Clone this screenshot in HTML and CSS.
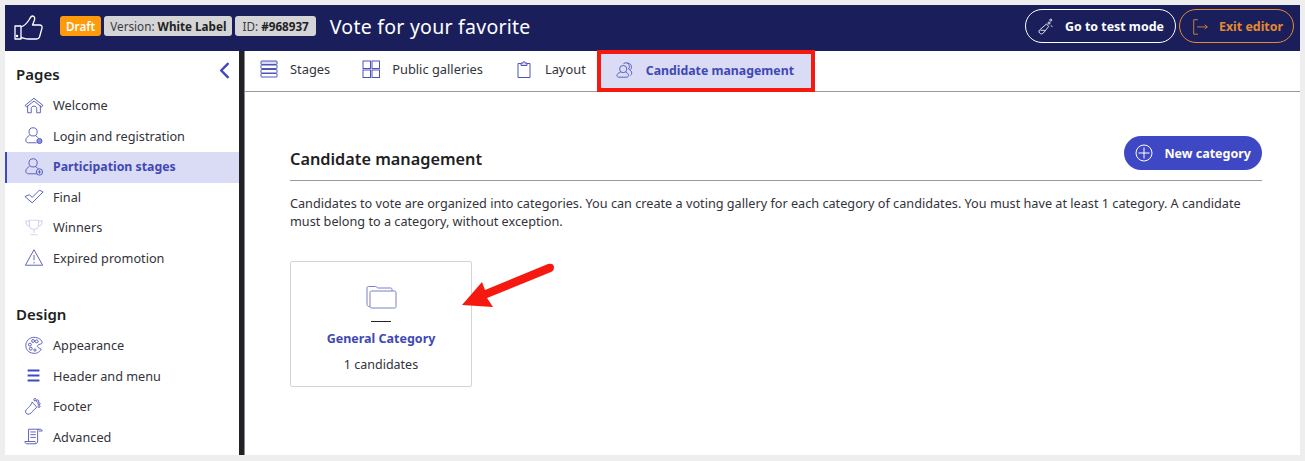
FILE: index.html
```html
<!DOCTYPE html>
<html lang="en">
<head>
<meta charset="utf-8">
<title>Vote for your favorite</title>
<link rel="stylesheet" href="styles.css">
</head>
<body>
<div class="frame">
  <header class="topbar">
    <svg class="logo" viewBox="0 0 30 26" fill="none" stroke="#fff" stroke-width="1.3" stroke-linejoin="round"><path d="M1 11h6v13H1z"/><path d="M7 12c3-1 6-4 8-7 1-2 2-4 3.500-4 2 0 2.500 2 2 4l-2 5h7c2 0 3 1.500 2.500 3l-2.500 9c-.5 1.500-1.500 2-3 2h-8c-3 0-5-1-7.500-1.500"/><circle cx="3" cy="21" r=".6" fill="#fff"/></svg>
    <span class="tag tag-draft">Draft</span>
    <span class="tag">Version:&nbsp;<b>White Label</b></span>
    <span class="tag tag-id">ID:&nbsp;<b>#968937</b></span>
    <h1 class="title">Vote for your favorite</h1>
    <a class="pill pill-test">
      <svg class="pill-icon" viewBox="0 0 20 20" fill="none" stroke="#fff" stroke-width="1"><path d="M3 18.500c-2-1-2.500-3-1-4.500l8-7 2.500 3-6 7.500c-1 1-2.500 1.500-3.500 1z"/><path d="M3 14.500h5"/><circle cx="13" cy="6" r="1.200"/><circle cx="15" cy="2.500" r="1.200"/><path d="M15 9l2 1"/></svg>
      Go to test mode
    </a>
    <a class="pill pill-exit">
      <svg class="pill-icon" viewBox="0 0 20 20" fill="none" stroke="#e68a2e" stroke-width="1"><path d="M7 2H2v17h5"/><path d="M6 10.500h12M15 8l3 2.500-3 2.500"/></svg>
      Exit editor
    </a>
  </header>
  <div class="body">
    <aside class="sidebar">
      <div class="side-head">
        <h2>Pages</h2>
        <svg class="collapse" viewBox="0 0 12 18" fill="none" stroke="#3f48c4" stroke-width="2.600" stroke-linecap="round" stroke-linejoin="round"><path d="M10 2L3 9l7 7"/></svg>
      </div>
      <ul class="menu">
        <li><svg viewBox="0 0 22 20" fill="none" stroke="#4f55b8" stroke-width="1"><path d="M1 10l10-8 10 8-2 1.500-8-6.500-8 6.500z"/><path d="M4 10v8h4v-5c0-3 6-3 6 0v5h4v-8"/></svg>Welcome</li>
        <li><svg viewBox="0 0 22 20" fill="none" stroke="#4f55b8" stroke-width="1"><circle cx="10" cy="6" r="4.500"/><path d="M6 10c-2 1-4 3-4 5 0 2 1 3 3 3h9"/><path d="M13 10.500c1 .5 2 1 2.500 2"/><circle cx="17" cy="16" r="2.800" fill="#8f94d8"/></svg>Login and registration</li>
        <li class="active"><svg viewBox="0 0 22 20" fill="none" stroke="#4f55b8" stroke-width="1"><circle cx="10" cy="6" r="4.500"/><path d="M6 10c-2 1-4 3-4 5 0 2 1 3 3 3h9"/><path d="M13 10.500c1 .5 2 1 2.500 2"/><circle cx="17" cy="16" r="3.500"/><path d="M17 14v4M15 16h4"/></svg>Participation stages</li>
        <li><svg viewBox="0 0 22 20" fill="none" stroke="#4f55b8" stroke-width="1"><path d="M1 10l5-2 3 3 8-8 4 2-12 12z"/></svg>Final</li>
        <li><svg viewBox="0 0 22 20" fill="none" stroke="#d5d6ee" stroke-width="1.200"><path d="M6 2h10v5c0 3-2 5-5 5s-5-2-5-5z"/><path d="M6 3H2c0 4 2 5 4 6M16 3h4c0 4-2 5-4 6M11 12v4M7 18h8"/></svg>Winners</li>
        <li><svg viewBox="0 0 22 20" fill="none" stroke="#4f55b8" stroke-width="1"><path d="M11 1.500l9.500 17h-19z"/><path d="M11 7v6M11 15v1.500"/></svg>Expired promotion</li>
      </ul>
      <h2 class="design">Design</h2>
      <ul class="menu">
        <li><svg viewBox="0 0 22 20" fill="none" stroke="#4f55b8" stroke-width="1"><path d="M19 14c-2 4-6 5-9 4.500C5 18 2 14.500 2 10c0-5 4-9 9-9 5 0 9 3 9 6 0 2-4 1-5 3-1 2 2 3 4 4z"/><circle cx="6.500" cy="9" r="1.600"/><circle cx="10" cy="5" r="1.600"/><circle cx="14" cy="5.500" r="1.600"/><circle cx="7.500" cy="13.500" r="1.600"/><circle cx="12" cy="15" r="1.200"/></svg>Appearance</li>
        <li><svg viewBox="0 0 22 20" fill="none" stroke="#3f48c4" stroke-width="2"><path d="M4 4.500h13M4 10h13M4 15.500h13"/></svg>Header and menu</li>
        <li><svg viewBox="0 0 22 20" fill="none" stroke="#4f55b8" stroke-width="1"><path d="M9 5c-1 3-2 4-4 6-2 2-4 3-3 6 1 2 4 2 6 0 2-2 3-4 6-6-1-2-3-3-5-6z"/><circle cx="12" cy="2.500" r="1.300"/><circle cx="15" cy="4" r="1.300"/><circle cx="16.500" cy="7" r="1.200"/><circle cx="16.500" cy="10" r="1.100"/></svg>Footer</li>
        <li><svg viewBox="0 0 22 20" fill="none" stroke="#4f55b8" stroke-width="1"><path d="M5 15V2h13c1 0 2 1 2 2h-4M16 2c-1 0-1 1-1 2v11c0 2-1 3-3 3H3c-1 0-2-1-2-2.500h11c0 1 1 1 1 1"/><path d="M7 5h6M7 8h6M7 11h6"/></svg>Advanced</li>
      </ul>
    </aside>
    <main class="main">
      <nav class="tabs">
        <a class="tab"><svg viewBox="0 0 18 18" fill="none" stroke="#4f55b8" stroke-width="1"><rect x="1" y="1" width="16" height="3.500" rx=".5" fill="#d9daf4"/><rect x="1" y="5" width="16" height="3.500" rx=".5"/><rect x="1" y="9.500" width="16" height="3.500" rx=".5"/><rect x="1" y="13.500" width="16" height="3.500" rx=".5"/></svg>Stages</a>
        <a class="tab"><svg viewBox="0 0 18 18" fill="none" stroke="#4f55b8" stroke-width="1"><rect x="1" y="1" width="7.500" height="7.500"/><rect x="10" y="1" width="7.500" height="7.500"/><rect x="1" y="10" width="7.500" height="7.500"/><rect x="10" y="10" width="7.500" height="7.500"/></svg>Public galleries</a>
        <a class="tab"><svg viewBox="0 0 18 18" fill="none" stroke="#4f55b8" stroke-width="1"><path d="M6 3.500H3v14h12v-14h-3"/><path d="M6 5.500V3h2c0-2 2-2 2 0h2v2.500z" fill="#d9daf4"/></svg>Layout</a>
        <a class="tab tab-active"><svg viewBox="0 0 20 18" fill="none" stroke="#4f55b8" stroke-width="1"><circle cx="8" cy="8" r="4"/><path d="M5 11.500c-2 .5-4 2-4 3.500 0 1 1 2 2 2h9c1 0 2-1 2-2s-1-2.500-3-3.500"/><path d="M8 2.500c1-1.500 3-2 5-1 2 1.500 2.500 4 1 6.500 2 1 3.500 2.500 3.500 4.500 0 1-.5 2-1.500 2.500"/><path d="M12 1.500c2-.5 4 .5 5 2.500.5 2 0 3.500-1 4.500"/></svg>Candidate management</a>
      </nav>
      <section class="content">
        <div class="section-head">
          <h3>Candidate management</h3>
          <a class="new-btn"><svg viewBox="0 0 18 18" fill="none" stroke="#fff" stroke-width="1"><circle cx="9" cy="9" r="8"/><path d="M9 3.500v11M3.500 9h11"/></svg>New category</a>
        </div>
        <p class="intro">Candidates to vote are organized into categories. You can create a voting gallery for each category of candidates. You must have at least 1 category. A candidate must belong to a category, without exception.</p>
        <div class="card">
          <svg class="folder" viewBox="0 0 32 24" fill="none" stroke="#7a7fcb" stroke-width="1"><path d="M5 21.500c-2 0-3-.5-3-2V3c0-1 .5-1.500 1.500-1.500h7c1 0 1.500.5 2 1.500h13c1 0 1.500.5 1.500 1.500V6"/><rect x="5" y="6" width="26" height="17" rx="1.500"/></svg>
          <span class="rule"></span>
          <strong>General Category</strong>
          <span class="count">1 candidates</span>
        </div>
      </section>
    </main>
  </div>
  <svg class="arrow" viewBox="0 0 100 50"><path d="M1 43L21 20l3 8 63-26c3-1 6 0 6 3 0 3-1 4-3 5L26 36l6 9z" fill="#f5190f"/></svg>
</div>
</body>
</html>
```

FILE: styles.css
```css
* { box-sizing: border-box; }
html, body { margin: 0; padding: 0; }
body { font-family: "Noto Sans", "Open Sans", sans-serif; color: #26262b; background: #eeeeee; }
.frame { position: relative; width: 1305px; height: 461px; padding: 5px 5px 6px 5px; display: flex; flex-direction: column; overflow: hidden; }
.topbar { height: 46px; flex: none; background: #1a1f5c; display: flex; align-items: center; padding: 0 6px 4px 9px; color: #fff; }
.logo { width: 30px; height: 26px; margin-right: 16px; margin-top: 3px; }
.tag { height: 20px; line-height: 20px; padding: 0 6px; margin-right: 3px; background: #d5d5d8; color: #3b3b40; border-radius: 3px; font-size: 11.700px; white-space: nowrap; }
.tag b { color: #1f1f24; font-weight: 700; }
.tag-draft { background: #ff9a0a; color: #fff; font-weight: 600; }
.tag-id { padding: 0 7px; }
.title { margin: 0 0 0 11px; font-size: 19.500px; font-weight: 400; flex: 1; letter-spacing: .25px; }
.pill { display: flex; align-items: center; height: 34px; border-radius: 17px; font-size: 12.400px; font-weight: 700; white-space: nowrap; }
.pill-test { border: 1px solid #fff; width: 151px; padding-left: 12px; margin-right: 3px; }
.pill-exit { border: 1px solid #e68a2e; color: #e68a2e; width: 115px; padding-left: 12px; }
.pill-icon { width: 17px; height: 17px; margin-right: 10px; }
.body { flex: 1; display: flex; min-height: 0; }
.sidebar { width: 239px; flex: none; background: #fff; border-right: 5px solid #222226; padding-top: 11px; overflow: hidden; }
.side-head { display: flex; justify-content: space-between; padding: 0 9px 0 11px; height: 24px; }
.sidebar h2 { margin: 0; font-size: 15px; font-weight: 600; color: #1e1e23; line-height: 24px; }
.collapse { width: 12px; height: 17px; }
.design { padding-left: 11px; margin-top: 28px !important; }
.menu { list-style: none; margin: 5px 0 0; padding: 0; }
.menu li { display: flex; align-items: center; height: 30.500px; padding: 0 0 2px 17px; font-size: 12.700px; color: #33333a; border-left: 2px solid transparent; }
.menu li svg { width: 20px; height: 19px; margin-right: 9px; flex: none; }
.menu li.active { background: #dadbf5; color: #3f48b4; font-weight: 700; font-size: 12.300px; border-left-color: #3f48c4; }
.main { flex: 1; background: #fff; min-width: 0; display: flex; flex-direction: column; border-left: 1px solid #8a8a8e; }
.tabs { display: flex; height: 41px; border-bottom: 1px solid #9a9a9e; padding-left: 15px; flex: none; }
.tab { display: flex; align-items: center; font-size: 12.850px; color: #33333a; margin-right: 32px; padding-bottom: 4px; white-space: nowrap; }
.tab svg { width: 18px; height: 18px; margin-right: 12px; }
.tab-active { margin: -1px 0 0 -21px; padding: 0 17px 2px 15px; background: #dadbf5; color: #3f48b4; font-weight: 700; font-size: 12.300px; border: 4px solid #f5190f; height: 42px; }
.content { padding: 44px 38px 0 45px; }
.section-head { display: flex; justify-content: space-between; height: 45px; padding-bottom: 9px; border-bottom: 1px solid #9a9a9e; }
.section-head h3 { margin: 12px 0 0; font-size: 16.300px; line-height: 22px; font-weight: 600; color: #1e1e23; }
.new-btn { display: flex; align-items: center; height: 34px; padding: 0 11px 0 11px; border-radius: 17px; background: #3f48c4; color: #fff; font-size: 12.500px; font-weight: 700; }
.new-btn svg { width: 18px; height: 18px; margin-right: 11px; }
.intro { margin: 14px 0 0; font-size: 12.680px; line-height: 17.500px; color: #33333a; }
.card { width: 182px; height: 126px; margin-top: 31px; border: 1px solid #d4d4d8; border-radius: 2px; display: flex; flex-direction: column; align-items: center; padding-top: 23px; }
.folder { width: 32px; height: 24px; }
.rule { width: 20px; border-top: 1px solid #222; margin-top: 12px; }
.card strong { font-size: 12.500px; font-weight: 700; color: #3f48b4; margin-top: 8px; }
.count { font-size: 12.500px; color: #33333a; margin-top: 9px; }
.arrow { position: absolute; left: 461px; top: 262px; width: 100px; height: 50px; }
```
